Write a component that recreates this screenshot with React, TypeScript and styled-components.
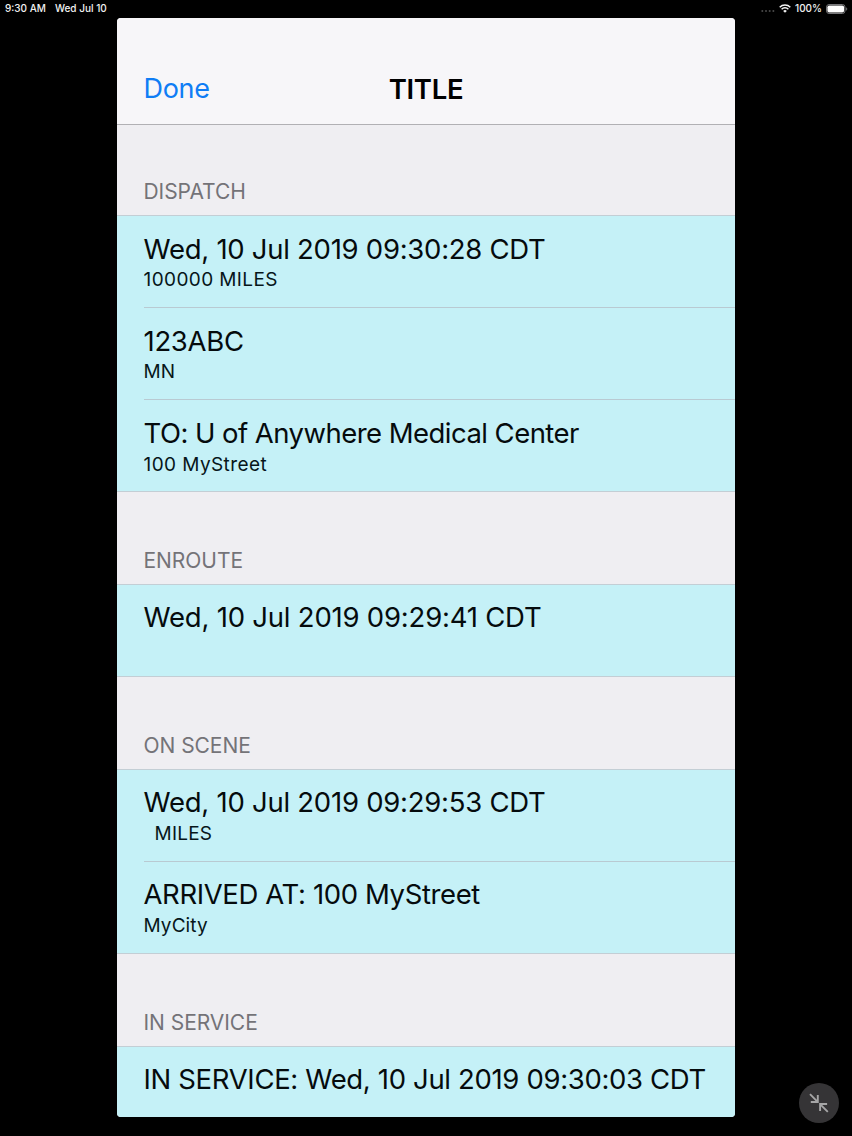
import React from "react";
import styled, { createGlobalStyle } from "styled-components";

const GlobalStyle = createGlobalStyle`
  * { box-sizing: border-box; }
  html, body { margin: 0; background: #000; }
  body { overflow: hidden; font-family: Inter, "Liberation Sans", sans-serif; }
`;

const Screen = styled.div`
  position: relative;
  width: 852px;
  height: 1136px;
  background: #000;
  display: flex;
  flex-direction: column;
  align-items: center;
`;

const StatusBar = styled.header`
  width: 100%;
  height: 18px;
  flex: none;
  padding: 0 4px 0 5px;
  display: flex;
  justify-content: space-between;
  color: #f2f2f2;
  font-size: 10px;
  font-weight: 500;
  line-height: 17px;
`;

const StatusGroup = styled.div<{ $gap: number }>`
  display: flex;
  align-items: center;
  height: 17px;
  gap: ${(p) => p.$gap}px;
`;

const StatusText = styled.span`
  white-space: nowrap;
`;

const Card = styled.main`
  width: 618px;
  height: 1099px;
  border-radius: 4px;
  overflow: hidden;
  background: #efeef2;
  display: flex;
  flex-direction: column;
`;

const NavBar = styled.nav`
  height: 107px;
  flex: none;
  padding: 35px 26.5px 0;
  background: #f7f6f9;
  border-bottom: 1px solid #b1b0b4;
  display: grid;
  grid-template-columns: 1fr auto 1fr;
  align-items: center;
`;

const DoneButton = styled.button`
  justify-self: start;
  padding: 0;
  border: 0;
  background: none;
  color: #0f7df5;
  font: 400 27px/34px Inter, sans-serif;
  letter-spacing: -0.3px;
`;

const Title = styled.h1`
  margin: 0;
  font-size: 27.5px;
  line-height: 34px;
  font-weight: 600;
  letter-spacing: -0.3px;
`;

const SectionHeader = styled.h2<{ $height: number }>`
  margin: 0;
  flex: none;
  height: ${(p) => p.$height}px;
  padding: 0 26.5px 9px;
  display: flex;
  align-items: flex-end;
  font-size: 21px;
  line-height: 28px;
  font-weight: 400;
  letter-spacing: -0.05px;
  color: #747378;
`;

const Rows = styled.ul`
  margin: 0;
  padding: 0;
  flex: none;
  list-style: none;
  background: #c5f1f7;
  border-top: 1px solid #c3ced5;
  border-bottom: 1px solid #c3ced5;
`;

const Row = styled.li<{ $height: number; $top: number }>`
  height: ${(p) => p.$height}px;
  margin-left: 26.5px;
  padding-top: ${(p) => p.$top}px;
  & + & { border-top: 1px solid #b9cad2; }
`;

const Primary = styled.div<{ $spacing: number }>`
  font-size: 27.5px;
  line-height: 34px;
  letter-spacing: ${(p) => p.$spacing}px;
  color: #050b0d;
  white-space: nowrap;
`;

const Secondary = styled.div<{ $spacing: number; $gap: number }>`
  margin-top: ${(p) => p.$gap}px;
  font-size: 19px;
  line-height: 26px;
  letter-spacing: ${(p) => p.$spacing}px;
  color: #07161a;
  white-space: pre;
`;

const ShrinkButton = styled.button`
  position: absolute;
  left: 798.5px;
  top: 1082.5px;
  width: 40px;
  height: 40px;
  padding: 0;
  border: 0;
  border-radius: 50%;
  background: #353436;
  svg { display: block; }
`;

type RowData = { text: string; ts: number; top: number; sub?: string; ss?: number; gap?: number; h: number };
type SectionData = { title: string; headerHeight: number; rows: RowData[] };

const sections: SectionData[] = [
  {
    title: "DISPATCH",
    headerHeight: 90,
    rows: [
      { text: "Wed, 10 Jul 2019 09:30:28 CDT", ts: -0.27, top: 16, sub: "100000 MILES", ss: 0.4, gap: 1, h: 91 },
      { text: "123ABC", ts: -0.3, top: 16, sub: "MN", ss: 0.1, gap: 1, h: 92 },
      { text: "TO: U of Anywhere Medical Center", ts: -0.54, top: 16, sub: "100 MyStreet", ss: 0.42, gap: 2, h: 92 },
    ],
  },
  {
    title: "ENROUTE",
    headerHeight: 92,
    rows: [{ text: "Wed, 10 Jul 2019 09:29:41 CDT", ts: -0.21, top: 15, h: 91 }],
  },
  {
    title: "ON SCENE",
    headerHeight: 92,
    rows: [
      { text: "Wed, 10 Jul 2019 09:29:53 CDT", ts: -0.25, top: 15, sub: "  MILES", ss: 0.2, gap: 2, h: 91 },
      { text: "ARRIVED AT: 100 MyStreet", ts: -0.38, top: 15, sub: "MyCity", ss: 0.1, gap: 2, h: 92 },
    ],
  },
  {
    title: "IN SERVICE",
    headerHeight: 92,
    rows: [{ text: "IN SERVICE: Wed, 10 Jul 2019 09:30:03 CDT", ts: -0.34, top: 15, h: 91 }],
  },
];

const Wifi = () => (
  <svg width="12" height="9" viewBox="0 0 12 9" fill="none" stroke="#f5f5f5" strokeWidth="1.5">
    <path d="M.7 3.2a7.5 7.5 0 0 1 10.6 0" />
    <path d="M2.6 5.2a4.8 4.8 0 0 1 6.8 0" />
    <path d="M6 8.8 4.2 6.9a2.6 2.6 0 0 1 3.6 0z" fill="#f5f5f5" stroke="none" />
  </svg>
);

const Battery = () => (
  <svg width="22" height="10" viewBox="0 0 22 10">
    <rect x=".5" y=".5" width="18.5" height="9" rx="2.6" fill="none" stroke="#77777a" />
    <rect x="1.4" y="1.4" width="16.7" height="7.2" rx="1.8" fill="#fff" />
    <path d="M20.2 3.3c1.4.5 1.4 2.9 0 3.4z" fill="#77777a" />
  </svg>
);

const Signal = () => (
  <svg width="14" height="9" viewBox="0 0 14 9" fill="#4a4a4a">
    <circle cx="1.3" cy="7" r="1" />
    <circle cx="5" cy="7" r="1" />
    <circle cx="8.7" cy="7" r="1" />
    <circle cx="12.4" cy="7" r="1" />
  </svg>
);

export default function App() {
  return (
    <Screen>
      <GlobalStyle />
      <StatusBar>
        <StatusGroup $gap={9}>
          <StatusText>9:30 AM</StatusText>
          <StatusText>Wed Jul 10</StatusText>
        </StatusGroup>
        <StatusGroup $gap={4}>
          <Signal />
          <Wifi />
          <StatusText>100%</StatusText>
          <Battery />
        </StatusGroup>
      </StatusBar>
      <Card>
        <NavBar>
          <DoneButton>Done</DoneButton>
          <Title>TITLE</Title>
        </NavBar>
        {sections.map((s) => (
          <React.Fragment key={s.title}>
            <SectionHeader $height={s.headerHeight}>{s.title}</SectionHeader>
            <Rows>
              {s.rows.map((r) => (
                <Row key={r.text} $height={r.h} $top={r.top}>
                  <Primary $spacing={r.ts}>{r.text}</Primary>
                  {r.sub && (
                    <Secondary $spacing={r.ss ?? 0} $gap={r.gap ?? 0}>
                      {r.sub}
                    </Secondary>
                  )}
                </Row>
              ))}
            </Rows>
          </React.Fragment>
        ))}
      </Card>
      <ShrinkButton aria-label="Shrink">
        <svg width="40" height="40" viewBox="0 0 40 40" fill="none" stroke="#a5a5a6" strokeWidth="1.9">
          <path d="M11 11.2l7.6 7.6M18.8 12v7h-7M28.8 28.8l-7.5-7.5M21.1 28v-7h7" />
        </svg>
      </ShrinkButton>
    </Screen>
  );
}
